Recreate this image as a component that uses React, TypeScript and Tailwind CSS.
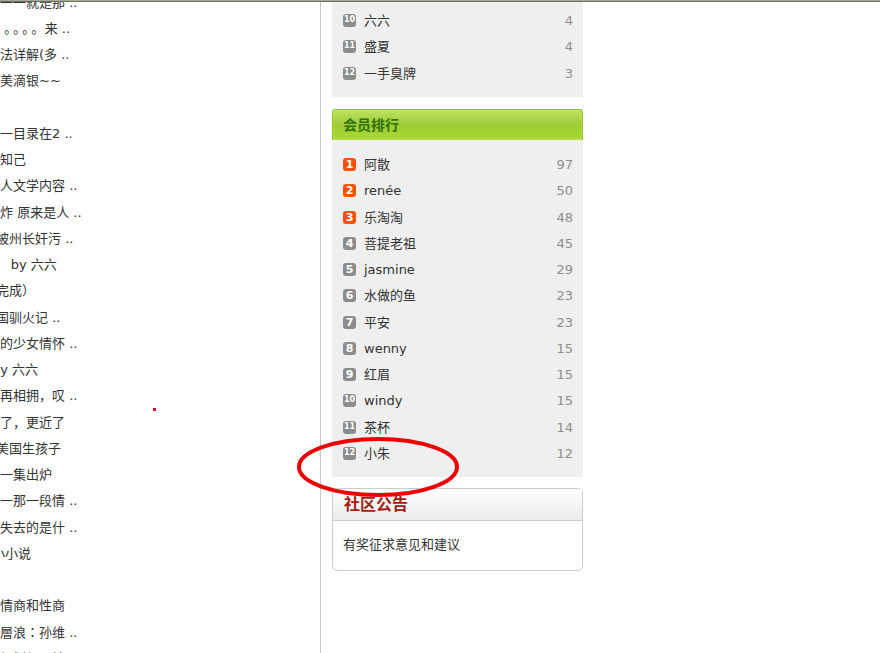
import clsx from 'clsx'

interface RankItem {
  rank: number
  name: string
  count: number
}

interface Topic {
  title: string
  // how the beginning of a long title is cut by the column edge
  cut?: 'small' | 'large'
  traditional?: boolean
}

const TOPICS: Topic[] = [
  { title: '一一就是那 ..' },
  { title: '\u00a0｡\u2009｡\u2009｡\u2009｡\u2009 来 ..' },
  { title: '法详解(多 ..' },
  { title: '美滴银~~' },
  { title: '' },
  { title: '一目录在2 ..' },
  { title: '知己' },
  { title: '人文学内容 ..' },
  { title: '炸 原来是人 ..' },
  { title: '被州长奸污 ..', cut: 'small' },
  { title: '\u2002 by 六六' },
  { title: '完成）', cut: 'small' },
  { title: '国驯火记 ..', cut: 'small' },
  { title: '的少女情怀 ..' },
  { title: 'by 六六', cut: 'large' },
  { title: '再相拥，叹 ..' },
  { title: '了，更近了' },
  { title: '美国生孩子', cut: 'small' },
  { title: '一集出炉' },
  { title: '一那一段情 ..' },
  { title: '失去的是什 ..' },
  { title: '小小说', cut: 'large' },
  { title: '' },
  { title: '情商和性商' },
  { title: '層浪：孙维 ..', traditional: true },
  { title: '规划与要地' },
]

const AUTHORS: RankItem[] = [
  { rank: 10, name: '六六', count: 4 },
  { rank: 11, name: '盛夏', count: 4 },
  { rank: 12, name: '一手臭牌', count: 3 },
]

const MEMBERS: RankItem[] = [
  { rank: 1, name: '阿散', count: 97 },
  { rank: 2, name: 'renée', count: 50 },
  { rank: 3, name: '乐淘淘', count: 48 },
  { rank: 4, name: '菩提老祖', count: 45 },
  { rank: 5, name: 'jasmine', count: 29 },
  { rank: 6, name: '水做的鱼', count: 23 },
  { rank: 7, name: '平安', count: 23 },
  { rank: 8, name: 'wenny', count: 15 },
  { rank: 9, name: '红眉', count: 15 },
  { rank: 10, name: 'windy', count: 15 },
  { rank: 11, name: '茶杯', count: 14 },
  { rank: 12, name: '小朱', count: 12 },
]

const RankList = ({ items }: { items: RankItem[] }) => (
  <ol>
    {items.map(({ rank, name, count }) => (
      <li key={rank} className="flex h-[26px] items-center nth-[4n+2]:mb-px">
        <span
          className={clsx(
            'mb-0.5 flex size-[13px] shrink-0 items-center justify-center rounded-[3px] font-bold leading-none text-white',
            rank <= 3 ? 'bg-[#f95006]' : 'bg-[#8c8c8c]',
            rank >= 10 ? 'text-[8px]' : 'text-[11px]',
          )}
        >
          {rank}
        </span>
        <a href="#" className="ml-2 flex-1">
          {name}
        </a>
        <span className="text-[#8e8e8e]">{count}</span>
      </li>
    ))}
  </ol>
)

const TopicList = () => (
  <ul className="-mt-3">
    {TOPICS.map(({ title, cut, traditional }, i) => (
      <li
        key={i}
        className={clsx(
          'h-[26px] whitespace-nowrap leading-[26px] nth-[4n]:mb-px',
          cut === 'small' && '-ml-1',
          cut === 'large' && '-ml-2',
          traditional && "font-['DejaVu_Sans','Noto_Sans_CJK_TC',sans-serif]",
        )}
      >
        {title && <a href="#">{title}</a>}
      </li>
    ))}
  </ul>
)

export default function App() {
  return (
    <div className="flex h-screen flex-col overflow-hidden bg-white font-['DejaVu_Sans','Noto_Sans_CJK_SC',sans-serif] text-[13px] text-[#333]">
      <div className="h-[2px] shrink-0 border-b border-[#6f7061] bg-[#a5a797]" />

      <div className="grid min-h-0 flex-1 grid-cols-[321fr_262fr_297fr]">
        <main className="relative overflow-hidden border-r border-[#c8c8c8]">
          <TopicList />
          <span className="absolute left-[153px] top-[406px] size-[3px] bg-[#d0102c]" />
        </main>

        <aside className="relative pl-[11px]">
          <section className="bg-[#efefef] pb-[10px] pl-[11px] pr-[10px] pt-[6px]">
            <RankList items={AUTHORS} />
          </section>

          <section className="mt-3 bg-[#efefef]">
            <h2 className="flex h-[31px] items-center rounded-t-[4px] border border-b-0 border-[#8fc31f] bg-linear-to-b from-[#bce35f] via-[#9fca35] to-[#a8dc30] pl-[10px] text-[14px] font-bold text-[#2f7208] shadow-[inset_0_0_2px_#d4f08a]">
              会员排行
            </h2>
            <div className="pb-[10px] pl-[11px] pr-[10px] pt-3">
              <RankList items={MEMBERS} />
            </div>
          </section>

          <section className="mt-[11px] rounded-[5px] border border-[#ccc]">
            <h2 className="flex h-8 items-center rounded-t-[4px] border-b border-[#ccc] bg-linear-to-b from-white to-[#ebebeb] pl-[11px] text-[16px] font-bold text-[#a32113]">
              社区公告
            </h2>
            <p className="h-[49px] pl-[10px] leading-[48px]">
              <a href="#">有奖征求意见和建议</a>
            </p>
          </section>

          <svg
            className="pointer-events-none absolute -left-6 top-[434px] h-[62px] w-[162px]"
            viewBox="0 0 162 62"
            fill="none"
            aria-hidden="true"
          >
            <ellipse cx="81" cy="31" rx="79" ry="28" stroke="#ec0000" strokeWidth="4" />
          </svg>
        </aside>
      </div>
    </div>
  )
}
